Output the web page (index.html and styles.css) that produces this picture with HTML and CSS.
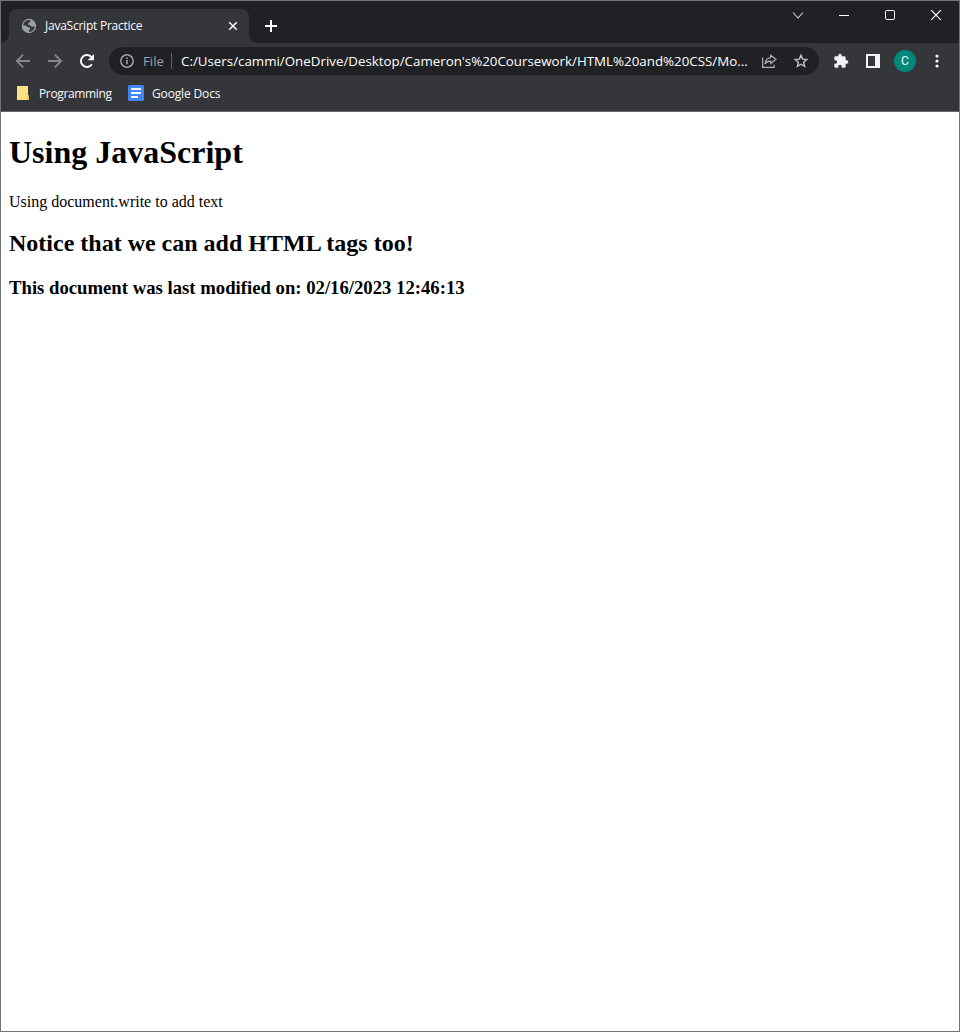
FILE: index.html
```html
<!DOCTYPE html>
<html lang="en">
<head>
<meta charset="utf-8">
<title>JavaScript Practice</title>
<link rel="stylesheet" href="styles.css">
</head>
<body>
<div class="window">
  <header class="tabstrip">
    <div class="tab">
      <svg class="globe" width="16" height="16" viewBox="0 0 16 16"><circle cx="8" cy="8" r="7.200" fill="#9aa0a6"/><path d="M8.800 2.100 9.500 3.500 7.300 5 7 6.700l2 .3 1.200 1.700 2.300-.2 1.400.2c-.5 2.900-2.700 5-5.500 5.300l-.9-1.200 1.700-1.500-.2-1.500-2-.6L4.900 7.500 2.200 7.200C2.600 4.300 4.900 2 8.800 2.100z" fill="#35363a"/></svg>
      <span class="tab-title">JavaScript Practice</span>
      <svg class="tab-close" width="10" height="10" viewBox="0 0 10 10"><path d="M1.200 1.200l7.600 7.600M8.800 1.200 1.200 8.800" stroke="#f1f3f4" stroke-width="1.600"/></svg>
    </div>
    <svg class="new-tab" width="14" height="14" viewBox="0 0 14 14"><path d="M7 1v12M1 7h12" stroke="#fff" stroke-width="2"/></svg>
    <div class="controls">
      <svg width="46" height="29" viewBox="0 0 46 29"><path d="M18 11.500l5 5.500 5-5.500" fill="none" stroke="#d5d6d8" stroke-width="1.100"/></svg>
      <svg width="46" height="29" viewBox="0 0 46 29"><path d="M18 14.500h10" stroke="#fff"/></svg>
      <svg width="46" height="29" viewBox="0 0 46 29"><rect x="18.500" y="9.500" width="9" height="9" rx="1.300" fill="none" stroke="#fff"/></svg>
      <svg width="46" height="29" viewBox="0 0 46 29"><path d="M18.200 9.200l9.600 9.600m0-9.600-9.600 9.600" stroke="#fff" stroke-width="1.200"/></svg>
    </div>
  </header>
  <nav class="toolbar">
    <svg class="nav-icon" width="16" height="16" viewBox="0 0 16 16" fill="none" stroke="#85878a" stroke-width="1.800"><path d="M15 8H2M8.200 1.600 1.800 8l6.400 6.400"/></svg>
    <svg class="nav-icon" width="16" height="16" viewBox="0 0 16 16" fill="none" stroke="#85878a" stroke-width="1.800"><path d="M1 8h13M7.800 1.600 14.200 8l-6.400 6.400"/></svg>
    <svg class="nav-icon" width="16" height="16" viewBox="0 0 16 16"><path d="M12.900 11.300A6 6 0 1 1 12.600 4.200" fill="none" stroke="#f8f9fa" stroke-width="2"/><path d="M15 1v6.300H8.700z" fill="#f8f9fa"/></svg>
    <div class="omnibox">
      <svg class="info" width="16" height="16" viewBox="0 0 16 16"><circle cx="8" cy="8" r="6.200" fill="none" stroke="#9aa0a6" stroke-width="1.500"/><path d="M8 7v4.300M8 4.500v1.600" stroke="#9aa0a6" stroke-width="1.600"/></svg>
      <span class="scheme">File</span>
      <span class="divider"></span>
      <span class="url">C:/Users/cammi/OneDrive/Desktop/Cameron's%20Coursework/HTML%20and%20CSS/Mo...</span>
      <svg class="share" width="16" height="16" viewBox="0 0 16 16" fill="none" stroke="#aeb1b5" stroke-width="1.200"><path d="M1.600 4.500v9.900h11.500v-2.700"/><path d="M9.700 2.200 15 6.300l-5.300 4.200V8.100C6.800 8.100 5.200 9 4 11c.4-3.600 2.200-5.900 5.700-6.400z"/></svg>
      <svg class="star" width="16" height="16" viewBox="0 0 16 16"><path d="M8 2.300l1.650 3.800 4.150.400-3.150 2.750.95 4.050L8 11.200l-3.600 2.100.95-4.050L2.200 6.500l4.150-.4z" fill="none" stroke="#bdc1c6" stroke-width="1.400"/></svg>
    </div>
    <svg class="puzzle" width="16" height="16" viewBox="0 0 24 24" fill="#f1f3f4"><path d="M20.500 11H19V7c0-1.100-.9-2-2-2h-4V3.500a2.500 2.500 0 0 0-5 0V5H4c-1.100 0-1.990.9-1.990 2v3.800H3.500a2.700 2.700 0 0 1 0 5.400H2V20c0 1.100.9 2 2 2h3.800v-1.500a2.700 2.700 0 0 1 5.400 0V22H17c1.100 0 2-.9 2-2v-4h1.500a2.500 2.500 0 0 0 0-5z"/></svg>
    <svg class="panel" width="14" height="14" viewBox="0 0 14 14"><path d="M0 0h14v14H0zM2 2v10h7V2z" fill="#f1f3f4" fill-rule="evenodd"/></svg>
    <span class="avatar">C</span>
    <svg class="menu" width="4" height="14" viewBox="0 0 4 14" fill="#f8f9fa"><circle cx="2" cy="2" r="1.600"/><circle cx="2" cy="7" r="1.600"/><circle cx="2" cy="12" r="1.600"/></svg>
  </nav>
  <div class="bookmarks">
    <svg class="folder" width="13" height="14" viewBox="0 0 13 14"><path d="M0 .7Q0 0 .7 0h9.600q.7 0 .7.700V9l1 1v3.300q0 .7-.7.700H.7Q0 14 0 13.300z" fill="#ffe083"/><path d="M10.500 9.300v3.200l-1.300 1.500h2.100q.7 0 .7-.7V10l-1-1z" fill="#eec54f"/></svg>
    <span class="bm-programming">Programming</span>
    <svg class="docs" width="16" height="16" viewBox="0 0 16 16"><rect width="16" height="16" rx="1.500" fill="#4285f4"/><path d="M3 4h10M3 8h10M3 12h7" stroke="#fff" stroke-width="1.800"/></svg>
    <span class="bm-docs">Google Docs</span>
  </div>
  <main class="page">
    <h1>Using JavaScript</h1>
    <p>Using document.write to add text</p>
    <h2>Notice that we can add HTML tags too!</h2>
    <h3>This document was last modified on: 02/16/2023 12:46:13</h3>
  </main>
</div>
</body>
</html>
```
FILE: styles.css
```css
* { box-sizing: border-box; }
body { margin: 0; background: #fff; }
svg { display: block; flex: none; }

.window {
  display: flex;
  flex-direction: column;
  height: 1032px;
  border: 1px solid #737476;
  font: 12px/16px "Open Sans", "Noto Sans", sans-serif;
  color: #f8f9fa;
  white-space: nowrap;
}

.tabstrip {
  display: flex;
  height: 42px;
  padding: 8px 0 0 8px;
  background: #202124;
}
.tab {
  position: relative;
  display: flex;
  align-items: center;
  width: 240px;
  height: 34px;
  padding: 0 11px 0 12px;
  border-radius: 8px 8px 0 0;
  background: #35363a;
}
.tab::before,
.tab::after {
  content: "";
  position: absolute;
  bottom: 0;
  width: 8px;
  height: 8px;
}
.tab::before { left: -8px; background: radial-gradient(circle at 0 0, #202124 7.500px, #35363a 8px); }
.tab::after { right: -8px; background: radial-gradient(circle at 100% 0, #202124 7.500px, #35363a 8px); }
.tab-title { margin-left: 8px; letter-spacing: -0.24px; }
.tab-close { margin-left: auto; }
.new-tab { margin: 10px 0 0 15px; }
.controls { display: flex; margin: -8px 0 0 auto; }

.toolbar {
  display: flex;
  align-items: center;
  height: 36px;
  padding-left: 14px;
  background: #35363a;
}
.nav-icon { margin-right: 16px; }
.omnibox {
  display: flex;
  align-items: center;
  width: 710px;
  height: 28px;
  margin-left: -2px;
  padding: 0 10px;
  border-radius: 14px;
  background: #202124;
}
.scheme { width: 28px; margin-left: 8px; font-size: 13.300px; color: #9aa0a6; }
.divider { width: 1px; height: 16px; margin-right: 9px; background: #5f6368; }
.url { width: 580px; font-size: 13.330px; color: #fff; }
.star { margin-left: 16px; }
.puzzle { margin-left: 14px; }
.panel { margin-left: 17px; }
.avatar {
  width: 22px;
  height: 22px;
  margin-left: 14px;
  border-radius: 50%;
  background: #00897b;
  font: 12px/22px Roboto, sans-serif;
  text-align: center;
}
.menu { margin-left: 19px; }

.bookmarks {
  display: flex;
  align-items: center;
  height: 33px;
  padding: 0 0 4px 16px;
  border-bottom: 1px solid #65666a;
  background: #35363a;
}
.folder { margin-right: 9px; }
.bm-programming { width: 89px; letter-spacing: -0.35px; }
.docs { margin-right: 8px; }
.bm-docs { letter-spacing: -0.15px; }
.bm-programming, .bm-docs { padding-top: 1px; }

.page {
  flex: 1;
  padding: 0 8px;
  background: #fff;
  color: #000;
  font: 16px "Liberation Serif", serif;
}
.page h1 { margin-top: 22.200px; }
.page h2 { margin-top: 19.200px; }
```
